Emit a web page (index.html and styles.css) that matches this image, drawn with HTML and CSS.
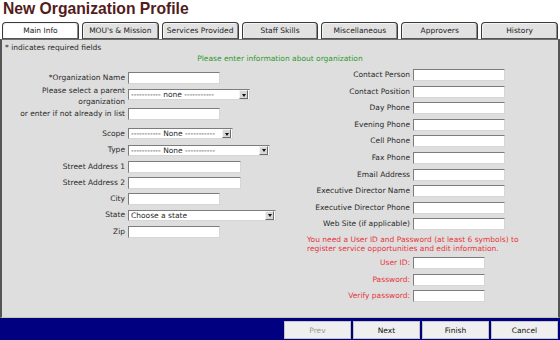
FILE: index.html
```html
<!DOCTYPE html>
<html lang="en">
<head>
  <meta charset="UTF-8">
  <meta name="viewport" content="width=device-width, initial-scale=1.0">
  <title>New Organization Profile</title>
  <link rel="stylesheet" href="styles.css">
</head>

<body>
  <h1 class="title">New Organization Profile</h1>

  <ul class="tabs">
    <li class="active">Main Info</li>
    <li>MOU's &amp; Mission</li>
    <li>Services Provided</li>
    <li>Staff Skills</li>
    <li>Miscellaneous</li>
    <li>Approvers</li>
    <li>History</li>
  </ul>

  <div class="panel">
    <p class="note">* indicates required fields</p>
    <p class="intro">Please enter information about organization</p>

    <div class="columns">
      <div class="col col-left">
        <div class="row">
          <label>*Organization Name</label>
          <input class="field field-sm" type="text">
        </div>
        <div class="row row-tall">
          <label>Please select a parent<br>organization</label>
          <span class="select select-parent">
            <select><option>----------- none -----------</option></select>
            <span class="select-arrow"></span>
          </span>
        </div>
        <div class="row">
          <label>or enter if not already in list</label>
          <input class="field field-sm" type="text">
        </div>
        <div class="spacer"></div>
        <div class="row">
          <label>Scope</label>
          <span class="select select-scope">
            <select><option>----------- None -----------</option></select>
            <span class="select-arrow"></span>
          </span>
        </div>
        <div class="row">
          <label>Type</label>
          <span class="select select-type">
            <select><option>----------- None -----------</option></select>
            <span class="select-arrow"></span>
          </span>
        </div>
        <div class="row">
          <label>Street Address 1</label>
          <input class="field field-md" type="text">
        </div>
        <div class="row">
          <label>Street Address 2</label>
          <input class="field field-md" type="text">
        </div>
        <div class="row">
          <label>City</label>
          <input class="field field-sm" type="text">
        </div>
        <div class="row">
          <label>State</label>
          <span class="select select-state">
            <select><option>Choose a state</option></select>
            <span class="select-arrow"></span>
          </span>
        </div>
        <div class="row">
          <label>Zip</label>
          <input class="field field-sm" type="text">
        </div>
      </div>

      <div class="col col-right">
        <div class="row"><label>Contact Person</label><input class="field field-sm" type="text"></div>
        <div class="row"><label>Contact Position</label><input class="field field-sm" type="text"></div>
        <div class="row"><label>Day Phone</label><input class="field field-sm" type="text"></div>
        <div class="row"><label>Evening Phone</label><input class="field field-sm" type="text"></div>
        <div class="row"><label>Cell Phone</label><input class="field field-sm" type="text"></div>
        <div class="row"><label>Fax Phone</label><input class="field field-sm" type="text"></div>
        <div class="row"><label>Email Address</label><input class="field field-sm" type="text"></div>
        <div class="row"><label>Executive Director Name</label><input class="field field-sm" type="text"></div>
        <div class="row"><label>Executive Director Phone</label><input class="field field-sm" type="text"></div>
        <div class="row"><label>Web Site (if applicable)</label><input class="field field-sm" type="text"></div>

        <p class="warning">You need a User ID and Password (at least 6 symbols) to<br>register service opportunities and edit information.</p>

        <div class="row row-login"><label>User ID:</label><input class="field field-xs" type="text"></div>
        <div class="row row-login"><label>Password:</label><input class="field field-xs" type="password"></div>
        <div class="row row-login"><label>Verify password:</label><input class="field field-xs" type="password"></div>
      </div>
    </div>
  </div>

  <div class="footer">
    <button class="btn" disabled>Prev</button>
    <button class="btn">Next</button>
    <button class="btn">Finish</button>
    <button class="btn">Cancel</button>
  </div>
</body>
</html>
```

FILE: styles.css
```css
* {
  box-sizing: border-box;
}

body {
  margin: 0;
  width: 560px;
  height: 340px;
  overflow: hidden;
  font-family: "DejaVu Sans", Verdana, sans-serif;
  font-size: 7.5px;
  color: #2a2a2a;
  background: #fff;
}

.title {
  margin: 0;
  padding-left: 3px;
  height: 22px;
  font: bold 15.7px/18px "Liberation Sans", Arial, sans-serif;
  color: #521c1c;
}

.tabs {
  display: grid;
  grid-template-columns: repeat(7, 1fr);
  gap: 3px;
  height: 17px;
  margin: 0;
  padding: 0 2px;
  list-style: none;
}

.tabs > li {
  border: 1px solid #3a3a3a;
  border-bottom-color: #555;
  border-radius: 4px 4px 0 0;
  box-shadow: inset 1px 1px 0 #f4f4f4, inset -1px 0 0 #8a8a8a;
  background: #e2e2e2;
  text-align: center;
  line-height: 15px;
  color: #222;
}

.tabs > li.active {
  background: #fff;
}

.panel {
  height: 279px;
  border-top: 1px solid #707070;
  border-left: 2px solid #555;
  border-right: 2px solid #555;
  border-bottom: 1px solid #c6c6b8;
  background: #dedede;
}

.note {
  margin: 0;
  padding: 2px 0 0 3px;
  line-height: 11px;
}

.intro {
  margin: 0;
  line-height: 11px;
  text-align: center;
  color: #2e9b2e;
}

.columns {
  display: flex;
}

.col-left {
  width: 278px;
  padding-top: 5.75px;
}

.col-right {
  flex: 1;
  padding-top: 3px;
}

.row {
  display: flex;
  align-items: center;
  height: 16.3px;
}

.col-right .row {
  height: 16.55px;
}

.col-right .row-login {
  height: 16.4px;
}

.row label {
  flex: none;
  width: 123px;
  margin-right: 3px;
  text-align: right;
  white-space: nowrap;
  line-height: 10px;
}

.col-right .row label {
  width: 130px;
}

.row-tall {
  height: 20px;
  align-items: flex-start;
}

.row-tall label {
  line-height: 10.5px;
}

.row-tall .select {
  margin-top: 3px;
}

.row-login label {
  color: #e8343c;
}

.spacer {
  height: 3.5px;
}

.field {
  height: 12px;
  padding: 0;
  border: 1px solid;
  border-color: #7c7c7c #d6d6d6 #d6d6d6 #7c7c7c;
  background: #fff;
}

.field-sm { width: 92px; }
.field-md { width: 113px; }
.field-xs { width: 72px; }

.select {
  position: relative;
  display: block;
  height: 11px;
}

.select select {
  appearance: none;
  width: 100%;
  height: 100%;
  margin: 0;
  padding: 0 0 0 2px;
  border: 1px solid;
  border-color: #7c7c7c #d6d6d6 #d6d6d6 #7c7c7c;
  background: #fff;
  font-family: "DejaVu Sans", Verdana, sans-serif;
  font-size: 7.5px;
  line-height: 9px;
  color: #2a2a2a;
}

.select-arrow {
  position: absolute;
  top: 1px;
  right: 2px;
  width: 9px;
  height: 9px;
  border: 1px solid;
  border-color: #f4f4f4 #6a6a6a #6a6a6a #f4f4f4;
  background: #d8d8d8;
}

.select-arrow::after {
  content: '';
  position: absolute;
  left: 1.5px;
  top: 2.5px;
  border-left: 2.5px solid transparent;
  border-right: 2.5px solid transparent;
  border-top: 3px solid #111;
}

.select-parent { width: 122px; }
.select-scope { width: 105px; }
.select-type { width: 142px; }
.select-state { width: 148px; }

.warning {
  margin: 3px 0 1.75px 27px;
  line-height: 9px;
  color: #e8343c;
}

.footer {
  display: flex;
  justify-content: flex-end;
  gap: 2px;
  height: 22px;
  padding: 3px 2px 1px;
  background: #000080;
}

.btn {
  width: 67px;
  height: 18px;
  margin: 0;
  padding: 0;
  border: 1px solid #c4c4c4;
  background: #efefef;
  font-family: "DejaVu Sans", Verdana, sans-serif;
  font-size: 7.5px;
  color: #111;
}

.btn:disabled {
  color: #9a9a9a;
}
```
